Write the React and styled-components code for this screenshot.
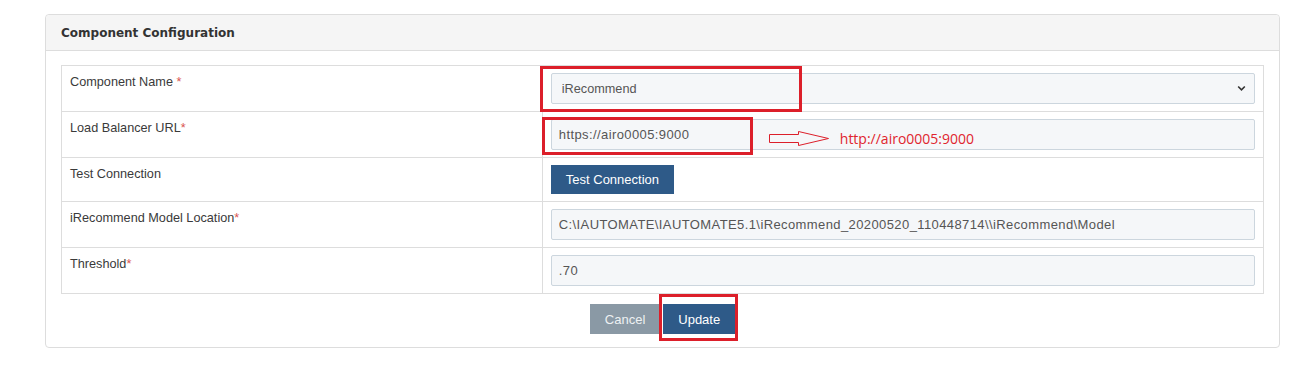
import styled, { createGlobalStyle } from "styled-components";

const GlobalStyle = createGlobalStyle`
  body {
    margin: 0;
    background: #fff;
    font-family: "Liberation Sans", Arial, sans-serif;
  }
`;

const Page = styled.div`
  padding: 14px 33px 0 45px;
`;

const Panel = styled.section`
  border: 1px solid #ddd;
  border-radius: 4px;
  background: #fff;
`;

const PanelHeader = styled.div`
  height: 36px;
  box-sizing: border-box;
  display: flex;
  align-items: center;
  padding: 0 15px;
  background: #f5f5f5;
  border-bottom: 1px solid #ddd;
  border-radius: 4px 4px 0 0;
  font-family: "DejaVu Sans", Verdana, sans-serif;
  font-weight: bold;
  font-size: 12px;
  color: #333;
`;

const PanelBody = styled.div`
  padding: 14px 15px 13px 15px;
`;

const ConfigTable = styled.table`
  width: 100%;
  border-collapse: collapse;
  border: 1px solid #ddd;
`;

const LabelCell = styled.td`
  width: 40%;
  padding: 8px 8px;
  vertical-align: top;
  border: 1px solid #ddd;
  font-size: 12.7px;
  line-height: 17px;
  color: #3a3a3a;
`;

const FieldCell = styled.td`
  position: relative;
  padding: 7px 8px;
  vertical-align: top;
  border: 1px solid #ddd;
`;

const Required = styled.span`
  color: #d9534f;
`;

const TextInput = styled.input`
  display: block;
  width: 100%;
  height: 31px;
  box-sizing: border-box;
  padding: 0 7px;
  border: 1px solid #ccd6de;
  border-radius: 2px;
  background: #f5f7f9;
  font-family: "Liberation Sans", Arial, sans-serif;
  font-size: 13px;
  letter-spacing: 0.4px;
  color: #555;
  outline: none;
`;

const SelectWrap = styled.div`
  position: relative;
  svg {
    position: absolute;
    right: 9px;
    top: 12px;
    pointer-events: none;
  }
`;

const Select = styled.select`
  display: block;
  width: 100%;
  height: 31px;
  box-sizing: border-box;
  padding: 0 10px;
  appearance: none;
  border: 1px solid #ccd6de;
  border-radius: 2px;
  background: #f5f7f9;
  font-family: "Liberation Sans", Arial, sans-serif;
  font-size: 12.7px;
  color: #555;
  outline: none;
`;

const Button = styled.button`
  height: ${(p) => p.$h || 30}px;
  min-width: ${(p) => p.$w || 0}px;
  padding: 0 15px;
  border: none;
  border-radius: 0;
  background: ${(p) => (p.$muted ? "#8a99a5" : "#2e5a88")};
  color: ${(p) => (p.$muted ? "#eef1f3" : "#fff")};
  font-family: "Liberation Sans", Arial, sans-serif;
  font-size: 13px;
  cursor: pointer;
`;

const Actions = styled.div`
  display: flex;
  justify-content: center;
  gap: 3px;
  margin-top: 10px;
`;

const Marked = styled.div`
  position: relative;
  display: inline-block;
`;

/* red annotation boxes drawn over the screenshot */
const RedBox = styled.div`
  position: absolute;
  left: ${(p) => p.$x}px;
  top: ${(p) => p.$y}px;
  width: ${(p) => p.$w}px;
  height: ${(p) => p.$h}px;
  box-sizing: border-box;
  border: 3px solid #dc1f2a;
  pointer-events: none;
`;

const Note = styled.div`
  position: absolute;
  left: 226px;
  top: 19px;
  display: flex;
  align-items: center;
  gap: 10px;
  font-family: "Open Sans", sans-serif;
  font-size: 14px;
  line-height: 14px;
  color: #e0252e;
  pointer-events: none;
`;

const Chevron = () => (
  <svg width="9" height="7" viewBox="0 0 9 7">
    <path d="M1.2 1.5 L4.5 4.8 L7.8 1.5" fill="none" stroke="#333" strokeWidth="1.6" />
  </svg>
);

const Arrow = () => (
  <svg width="61" height="15" viewBox="0 0 61 15">
    <path
      d="M0.5 3.5 H29.5 V0.5 L59.5 7.5 L29.5 14.5 V11.5 H0.5 Z"
      fill="none"
      stroke="#dc1f2a"
      strokeWidth="1"
    />
  </svg>
);

const App = () => {
  return (
    <>
      <GlobalStyle />
      <Page>
        <Panel>
          <PanelHeader>Component Configuration</PanelHeader>
          <PanelBody>
            <ConfigTable>
              <tbody>
                <tr>
                  <LabelCell>
                    Component Name <Required>*</Required>
                  </LabelCell>
                  <FieldCell>
                    <SelectWrap>
                      <Select defaultValue="iRecommend">
                        <option>iRecommend</option>
                      </Select>
                      <Chevron />
                    </SelectWrap>
                    <RedBox $x={-3} $y={0} $w={262} $h={46} />
                  </FieldCell>
                </tr>
                <tr>
                  <LabelCell>
                    Load Balancer URL<Required>*</Required>
                  </LabelCell>
                  <FieldCell>
                    <TextInput readOnly value="https://airo0005:9000" />
                    <RedBox $x={-1} $y={5} $w={211} $h={38} />
                    <Note>
                      <Arrow />
                      http://airo0005:9000
                    </Note>
                  </FieldCell>
                </tr>
                <tr>
                  <LabelCell>Test Connection</LabelCell>
                  <FieldCell>
                    <Button $h={29}>Test Connection</Button>
                  </FieldCell>
                </tr>
                <tr>
                  <LabelCell>
                    iRecommend Model Location<Required>*</Required>
                  </LabelCell>
                  <FieldCell>
                    <TextInput
                      readOnly
                      value={"C:\\IAUTOMATE\\IAUTOMATE5.1\\iRecommend_20200520_110448714\\\\iRecommend\\Model"}
                    />
                  </FieldCell>
                </tr>
                <tr>
                  <LabelCell>
                    Threshold<Required>*</Required>
                  </LabelCell>
                  <FieldCell>
                    <TextInput readOnly value=".70" />
                  </FieldCell>
                </tr>
              </tbody>
            </ConfigTable>
            <Actions>
              <Button $muted $w={70}>Cancel</Button>
              <Marked>
                <Button $w={70}>Update</Button>
                <RedBox $x={-4} $y={-10} $w={79} $h={47} />
              </Marked>
            </Actions>
          </PanelBody>
        </Panel>
      </Page>
    </>
  );
};

export default App;
